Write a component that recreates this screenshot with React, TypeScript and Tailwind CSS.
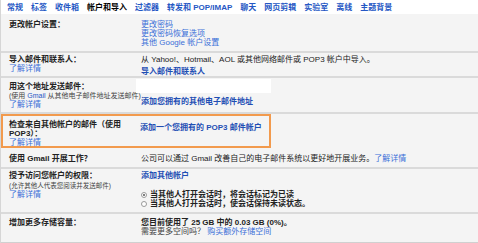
const tabs = ["常规", "标签", "收件箱", "帐户和导入", "过滤器", "转发和 POP/IMAP", "聊天", "网页剪辑", "实验室", "离线", "主题背景"];

function Link({ children, bold = false }: { children: React.ReactNode; bold?: boolean }) {
  return (
    <span className={bold ? "font-bold text-[#1f4fb4] cursor-pointer" : "text-[#3a6fd8] cursor-pointer"}>
      {children}
    </span>
  );
}

function Radio({ checked }: { checked?: boolean }) {
  return (
    <span className="mr-[3px] inline-flex h-[6px] w-[6px] items-center justify-center rounded-full border border-[#9a9a9a] bg-white align-middle">
      {checked && <span className="h-[2px] w-[2px] rounded-full bg-[#555]" />}
    </span>
  );
}

export default function App() {
  return (
    <div className="h-[243px] w-[478px] overflow-hidden border-l border-[#d6d6d6] bg-[#f4f4f4] font-['Liberation_Sans','Noto_Sans_CJK_SC',sans-serif] text-[8px] leading-[9px] text-[#222]">
      {/* tabs */}
      <div className="flex h-[14px] items-center gap-[8px] bg-white pl-[6px]">
        {tabs.map((t) => (
          <span key={t} className={t === "帐户和导入" ? "font-bold text-black" : "font-bold text-[#2557c4]"}>
            {t}
          </span>
        ))}
      </div>

      {/* 更改帐户设置 */}
      <div className="flex h-[39px] border-b-2 border-[#dadada] pt-[6px]">
        <div className="w-[140px] pl-[8px] font-bold">更改帐户设置：</div>
        <div className="flex flex-col">
          <Link>更改密码</Link>
          <Link>更改密码恢复选项</Link>
          <Link>其他 Google 帐户设置</Link>
        </div>
      </div>

      {/* 导入 */}
      <div className="flex h-[25px] border-b-2 border-[#dadada] pt-[2px]">
        <div className="flex w-[140px] flex-col pl-[8px]">
          <span className="font-bold">导入邮件和联系人：</span>
          <Link>了解详情</Link>
        </div>
        <div className="flex flex-col">
          <span>从 Yahoo!、Hotmail、AOL 或其他网络邮件或 POP3 帐户中导入。</span>
          <span className="mt-[3px]">
            <Link bold>导入邮件和联系人</Link>
          </span>
        </div>
      </div>

      {/* 发送邮件 */}
      <div className="flex h-[36px] border-b-2 border-[#dadada]">
        <div className="flex w-[140px] flex-col pl-[8px] pt-[4px]">
          <span className="font-bold">用这个地址发送邮件：</span>
          <span className="text-[7px] text-[#444]">
            (使用 <span className="text-[#2557c4]">Gmail</span> 从其他电子邮件地址发送邮件)
          </span>
          <Link>了解详情</Link>
        </div>
        <div className="flex flex-col">
          <div className="ml-[-5px] mt-[1px] h-[14px] w-[135px] bg-white" />
          <span className="mt-[4px]">
            <Link bold>添加您拥有的其他电子邮件地址</Link>
          </span>
        </div>
      </div>

      {/* POP3 */}
      <div className="h-[34px]">
        <div className="flex h-[34px] w-[270px] border-2 border-[#f29a4d] pt-[4px]">
          <div className="flex w-[137px] flex-col pl-[6px]">
            <span className="font-bold">检查来自其他帐户的邮件（使用 POP3）：</span>
            <Link>了解详情</Link>
          </div>
          <div className="pt-[3px]">
            <Link bold>添加一个您拥有的 POP3 邮件帐户</Link>
          </div>
        </div>
      </div>

      {/* Gmail 工作 */}
      <div className="flex h-[21px] items-center border-b-2 border-[#dadada] pt-[1px]">
        <div className="w-[140px] pl-[8px] font-bold">使用 Gmail 开展工作？</div>
        <div>
          公司可以通过 Gmail 改善自己的电子邮件系统以更好地开展业务。<Link>了解详情</Link>
        </div>
      </div>

      {/* 授予访问 */}
      <div className="flex h-[45px] border-b-2 border-[#dadada] pt-[2px]">
        <div className="flex w-[140px] flex-col pl-[8px]">
          <span className="font-bold">授予访问您帐户的权限：</span>
          <span className="mt-[1px] text-[6.5px] text-[#444]">(允许其他人代表您阅读并发送邮件)</span>
          <Link>了解详情</Link>
        </div>
        <div className="flex flex-col">
          <Link bold>添加其他帐户</Link>
          <span className="mt-[10px] font-bold">
            <Radio checked />当其他人打开会话时，将会话标记为已读
          </span>
          <span className="font-bold">
            <Radio />当其他人打开会话时，使会话保持未读状态。
          </span>
        </div>
      </div>

      {/* 存储 */}
      <div className="flex h-[29px] border-b border-[#d0d0d0] pt-[4px]">
        <div className="w-[140px] pl-[8px] font-bold">增加更多存储容量：</div>
        <div className="flex flex-col">
          <span className="font-bold">您目前使用了 25 GB 中的 0.03 GB (0%)。</span>
          <span className="text-[#444]">
            需要更多空间吗？ <Link>购买额外存储空间</Link>
          </span>
        </div>
      </div>
    </div>
  );
}
